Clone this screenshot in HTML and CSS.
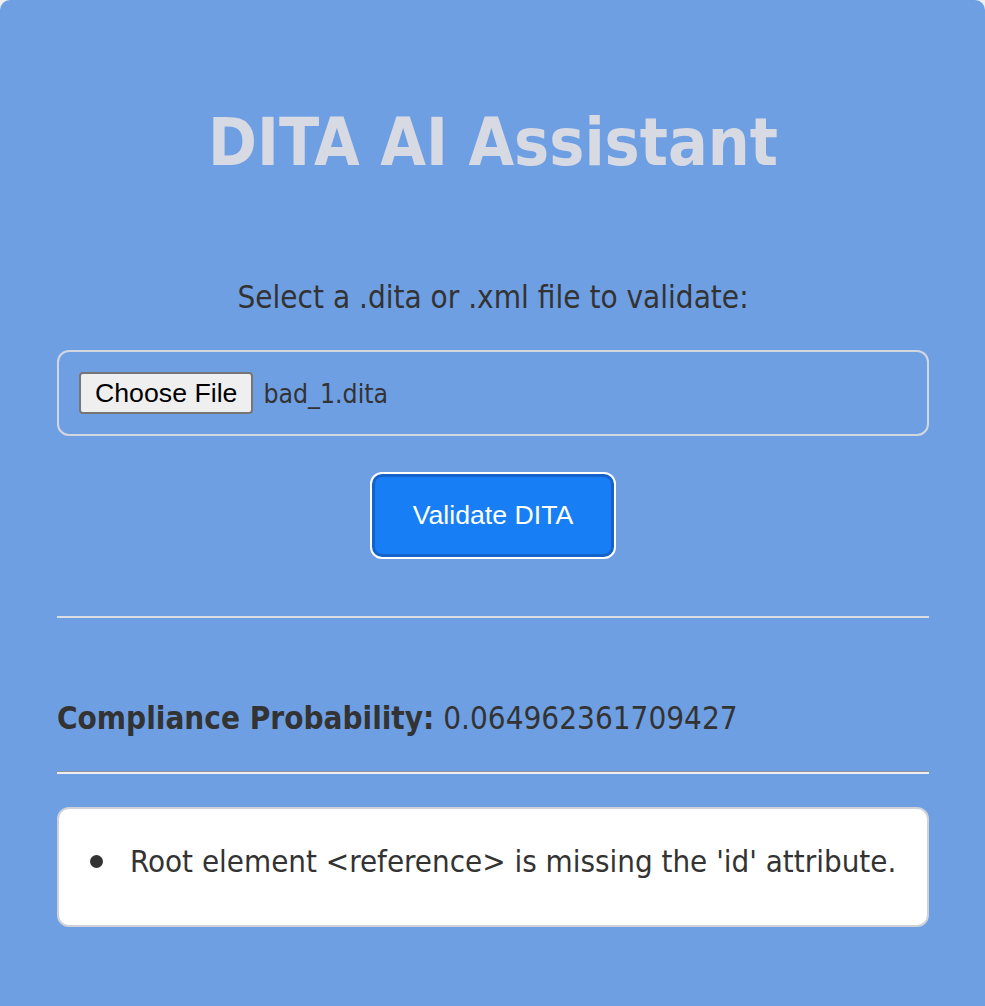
FILE: index.html
```html
<!DOCTYPE html>
<html lang="en">
<head>
<meta charset="utf-8">
<title>DITA AI Assistant</title>
<link rel="stylesheet" href="styles.css">
</head>
<body>
<main class="container">
  <h1 class="title">DITA AI Assistant</h1>
  <p class="label">Select a .dita or .xml file to validate:</p>
  <div class="file-box">
    <span class="file-btn">Choose File</span>
    <span class="file-name">bad_1.dita</span>
  </div>
  <div class="actions">
    <button class="validate-btn" type="button">Validate DITA</button>
  </div>
  <hr class="sep">
  <p class="prob"><strong>Compliance Probability:</strong> 0.064962361709427</p>
  <hr class="sep2">
  <div class="result">
    <ul class="issues">
      <li>Root element &lt;reference&gt; is missing the 'id' attribute.</li>
    </ul>
  </div>
</main>
</body>
</html>
```

FILE: styles.css
```css
html, body {
  margin: 0;
  padding: 0;
  background: #efefef;
}

body {
  font-family: "DejaVu Sans Condensed", "DejaVu Sans", sans-serif;
  font-stretch: condensed;
  color: #333;
}

.container {
  background: #6f9fe3;
  border-radius: 10px 10px 0 0;
  padding: 110px 56px 40px 57px;
  min-height: 1006px;
  box-sizing: border-box;
}

.title {
  margin: 0;
  font-size: 65.6px;
  line-height: 64px;
  font-weight: bold;
  text-align: center;
  color: #d8dae3;
}

.label {
  margin: 107px 0 0;
  font-size: 31.2px;
  line-height: 32px;
  text-align: center;
}

.file-box {
  margin-top: 37px;
  border: 2px solid #d4d6df;
  border-radius: 12px;
  padding: 20px;
  display: flex;
  align-items: center;
  gap: 10px;
}

.file-btn {
  font-family: "Liberation Sans", Arial, sans-serif;
  font-stretch: normal;
  font-size: 26.7px;
  color: #000;
  background: #efefef;
  border: 2px solid #767676;
  border-radius: 4px;
  height: 42px;
  box-sizing: border-box;
  padding: 0 14px;
  display: flex;
  align-items: center;
}

.file-name {
  font-size: 26.4px;
  color: #333;
}

.actions {
  display: flex;
  justify-content: center;
  margin-top: 36px;
}

.validate-btn {
  font-family: "Liberation Sans", Arial, sans-serif;
  font-size: 26.7px;
  color: #fff;
  background: #187ef6;
  border: 2px solid #fff;
  box-shadow: inset 0 0 0 3px #1563c9;
  border-radius: 12px;
  width: 246px;
  height: 87px;
  padding: 0;
}

.sep {
  margin: 57px 0 0;
  height: 0;
  border: 0;
  border-top: 2px solid #dcdde3;
}

.prob {
  margin: 84px 0 0;
  font-size: 31.2px;
  line-height: 32px;
}

.sep2 {
  margin: 37px 0 0;
  height: 0;
  border: 0;
  border-top: 1px solid #8f9399;
  border-bottom: 2px solid #eeeeee;
}

.result {
  margin-top: 33px;
  background: #fff;
  border: 2px solid #d0d2d8;
  border-radius: 12px;
  padding: 36px 0 48px;
}

.issues {
  list-style: none;
  margin: 0;
  padding: 0;
}

.issues li {
  display: flex;
  align-items: center;
  font-size: 31px;
  line-height: 32px;
}

.issues li::before {
  content: "";
  flex: none;
  width: 13px;
  height: 13px;
  border-radius: 50%;
  background: #333;
  margin: 0 27px 0 31px;
}
```
